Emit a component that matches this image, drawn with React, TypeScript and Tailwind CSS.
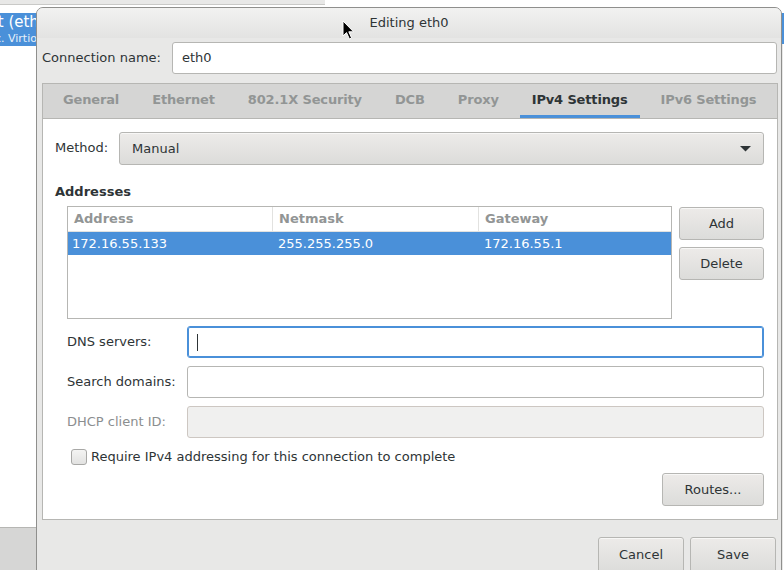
import React from 'react';

const tabs = ['General', 'Ethernet', '802.1X Security', 'DCB', 'Proxy', 'IPv4 Settings', 'IPv6 Settings'];

function GtkButton({ children, className = '' }: { children: React.ReactNode; className?: string }) {
  return (
    <div
      className={`flex items-center justify-center rounded-[3px] border border-[#b6b6b3] bg-gradient-to-b from-[#edebe9] to-[#dcdcda] text-[#2e3436] shadow-[inset_0_1px_0_rgba(255,255,255,0.6)] ${className}`}
    >
      {children}
    </div>
  );
}

function Entry({ focused, disabled, children }: { focused?: boolean; disabled?: boolean; children?: React.ReactNode }) {
  let cls = 'border-[#b6b6b3] bg-white';
  if (focused) cls = 'border-[#4a90d9] bg-white shadow-[inset_0_0_0_1px_#4a90d9]';
  if (disabled) cls = 'border-[#cdc7c2] bg-[#f0f0ef]';
  return <div className={`flex h-[32px] flex-1 items-center rounded-[3px] border px-[9px] ${cls}`}>{children}</div>;
}

function Cursor() {
  return (
    <svg className="absolute left-[342px] top-[20px]" width="14" height="21" viewBox="0 0 14 21">
      <path d="M1 1 L1 16 L4.5 12.6 L7.4 19 L9.6 18 L6.8 11.8 L11.6 11.8 Z" fill="#000" stroke="#fff" strokeWidth="1" strokeLinejoin="round" />
    </svg>
  );
}

export default function App() {
  return (
    <div className="relative h-[570px] w-[784px] overflow-hidden bg-white font-['DejaVu_Sans',sans-serif] text-[13px] text-[#2e3436]">
      {/* backdrop window */}
      <div className="h-[5px] w-[325px] border-b border-[#c9c9c7] bg-[#e8e8e7]" />
      <div className="mt-[8px] flex h-[33px] w-[40px] flex-col overflow-hidden bg-[#4a90d9] text-white">
        <div className="ml-[-61px] mt-[-1px] whitespace-nowrap text-[15px] leading-[20px]">Ethernet (eth0)</div>
        <div className="ml-[-66px] whitespace-nowrap text-[11px] leading-[13px] text-[#e8f0fa]">Red Hat, Inc. Virtio network device</div>
      </div>
      <div className="absolute left-0 top-[527px] h-[43px] w-[40px] border-t border-[#b6b6b3] bg-[#d6d6d5]" />
      <div className="absolute right-0 top-[13px] h-[31px] w-[4px] bg-[#4a90d9]" />
      <div className="absolute right-[1px] top-[44px] h-[526px] w-[3px] bg-[#e8e8e7]" />

      {/* dialog */}
      <div className="absolute left-[36px] top-[7px] flex h-[580px] w-[746px] flex-col rounded-t-[7px] border border-[#8f8f8d] bg-[#e8e8e7]">
        <div className="flex h-[30px] items-center justify-center rounded-t-[6px] bg-gradient-to-b from-[#f2f2f1] to-[#e3e3e2]">
          Editing eth0
        </div>

        <div className="flex flex-col pl-[5px] pr-[3px]">
          <div className="mt-[3px] flex h-[34px] items-center pr-[1px]">
            <div className="w-[130px]">Connection name:</div>
            <Entry>eth0</Entry>
          </div>

          {/* notebook */}
          <div className="mt-[8px] flex flex-col border border-[#b6b6b3]">
            <div className="flex h-[35px] items-stretch gap-[9px] overflow-hidden border-b border-[#b6b6b3] bg-[#d5d5d4] pl-[8px]">
              {tabs.map((t) => {
                const active = t === 'IPv4 Settings';
                return (
                  <div
                    key={t}
                    className={`flex shrink-0 items-center whitespace-nowrap border-b-[3px] px-[12px] pt-[1px] font-bold tracking-[-0.15px] ${
                      active ? 'border-[#4a90d9] text-[#2e3436]' : 'border-transparent text-[#929595]'
                    }`}
                  >
                    {t}
                  </div>
                );
              })}
            </div>

            <div className="flex h-[400px] flex-col bg-white pl-[12px] pr-[13px]">
              <div className="mt-[13px] flex h-[33px] items-center">
                <div className="w-[64px] pb-[1px]">Method:</div>
                <GtkButton className="h-[33px] flex-1 !justify-between px-[12px]">
                  <span>Manual</span>
                  <svg width="11" height="6" viewBox="0 0 11 6">
                    <path d="M0 0 L11 0 L5.5 5.5 Z" fill="#2e3436" />
                  </svg>
                </GtkButton>
              </div>

              <div className="mt-[18px] font-bold leading-[17px]">Addresses</div>

              <div className="ml-[12px] mt-[6px] flex gap-[7px]">
                <div className="flex h-[113px] flex-1 flex-col border border-[#b6b6b3]">
                  <div className="flex h-[25px] border-b border-[#e2e2e0] font-bold text-[#929595]">
                    <div className="flex w-[205px] items-center border-r border-[#e2e2e0] px-[6px]">Address</div>
                    <div className="flex w-[206px] items-center border-r border-[#e2e2e0] px-[6px]">Netmask</div>
                    <div className="flex flex-1 items-center px-[6px]">Gateway</div>
                  </div>
                  <div className="flex h-[23px] bg-[#4a90d9] pt-[1px] text-white">
                    <div className="flex w-[205px] items-center px-[4px]">172.16.55.133</div>
                    <div className="flex w-[206px] items-center px-[5px]">255.255.255.0</div>
                    <div className="flex flex-1 items-center px-[5px]">172.16.55.1</div>
                  </div>
                </div>
                <div className="flex w-[85px] flex-col gap-[7px] pt-[1px]">
                  <GtkButton className="h-[33px]">Add</GtkButton>
                  <GtkButton className="h-[33px]">Delete</GtkButton>
                </div>
              </div>

              <div className="ml-[12px] mt-[7px] flex flex-col gap-[8px]">
                <div className="flex items-center">
                  <div className="w-[120px]">DNS servers:</div>
                  <Entry focused>
                    <div className="h-[17px] w-px bg-[#2e3436]" />
                  </Entry>
                </div>
                <div className="flex items-center">
                  <div className="w-[120px]">Search domains:</div>
                  <Entry />
                </div>
                <div className="flex items-center">
                  <div className="w-[120px] text-[#8b8e8f]">DHCP client ID:</div>
                  <Entry disabled />
                </div>
              </div>

              <div className="ml-[16px] mt-[9px] flex items-center gap-[4px]">
                <div className="h-[16px] w-[16px] rounded-[3px] border border-[#a8a8a6] bg-gradient-to-b from-[#f4f4f3] to-[#e2e2e1]" />
                <span>Require IPv4 addressing for this connection to complete</span>
              </div>

              <div className="mt-[6px] flex justify-end">
                <GtkButton className="h-[33px] w-[102px] pt-[1px]">Routes...</GtkButton>
              </div>
            </div>
          </div>

          <div className="mt-[17px] flex justify-end gap-[6px] pr-[2px]">
            <GtkButton className="h-[36px] w-[86px]">Cancel</GtkButton>
            <GtkButton className="h-[36px] w-[86px]">Save</GtkButton>
          </div>
        </div>
      </div>

      <Cursor />
    </div>
  );
}
